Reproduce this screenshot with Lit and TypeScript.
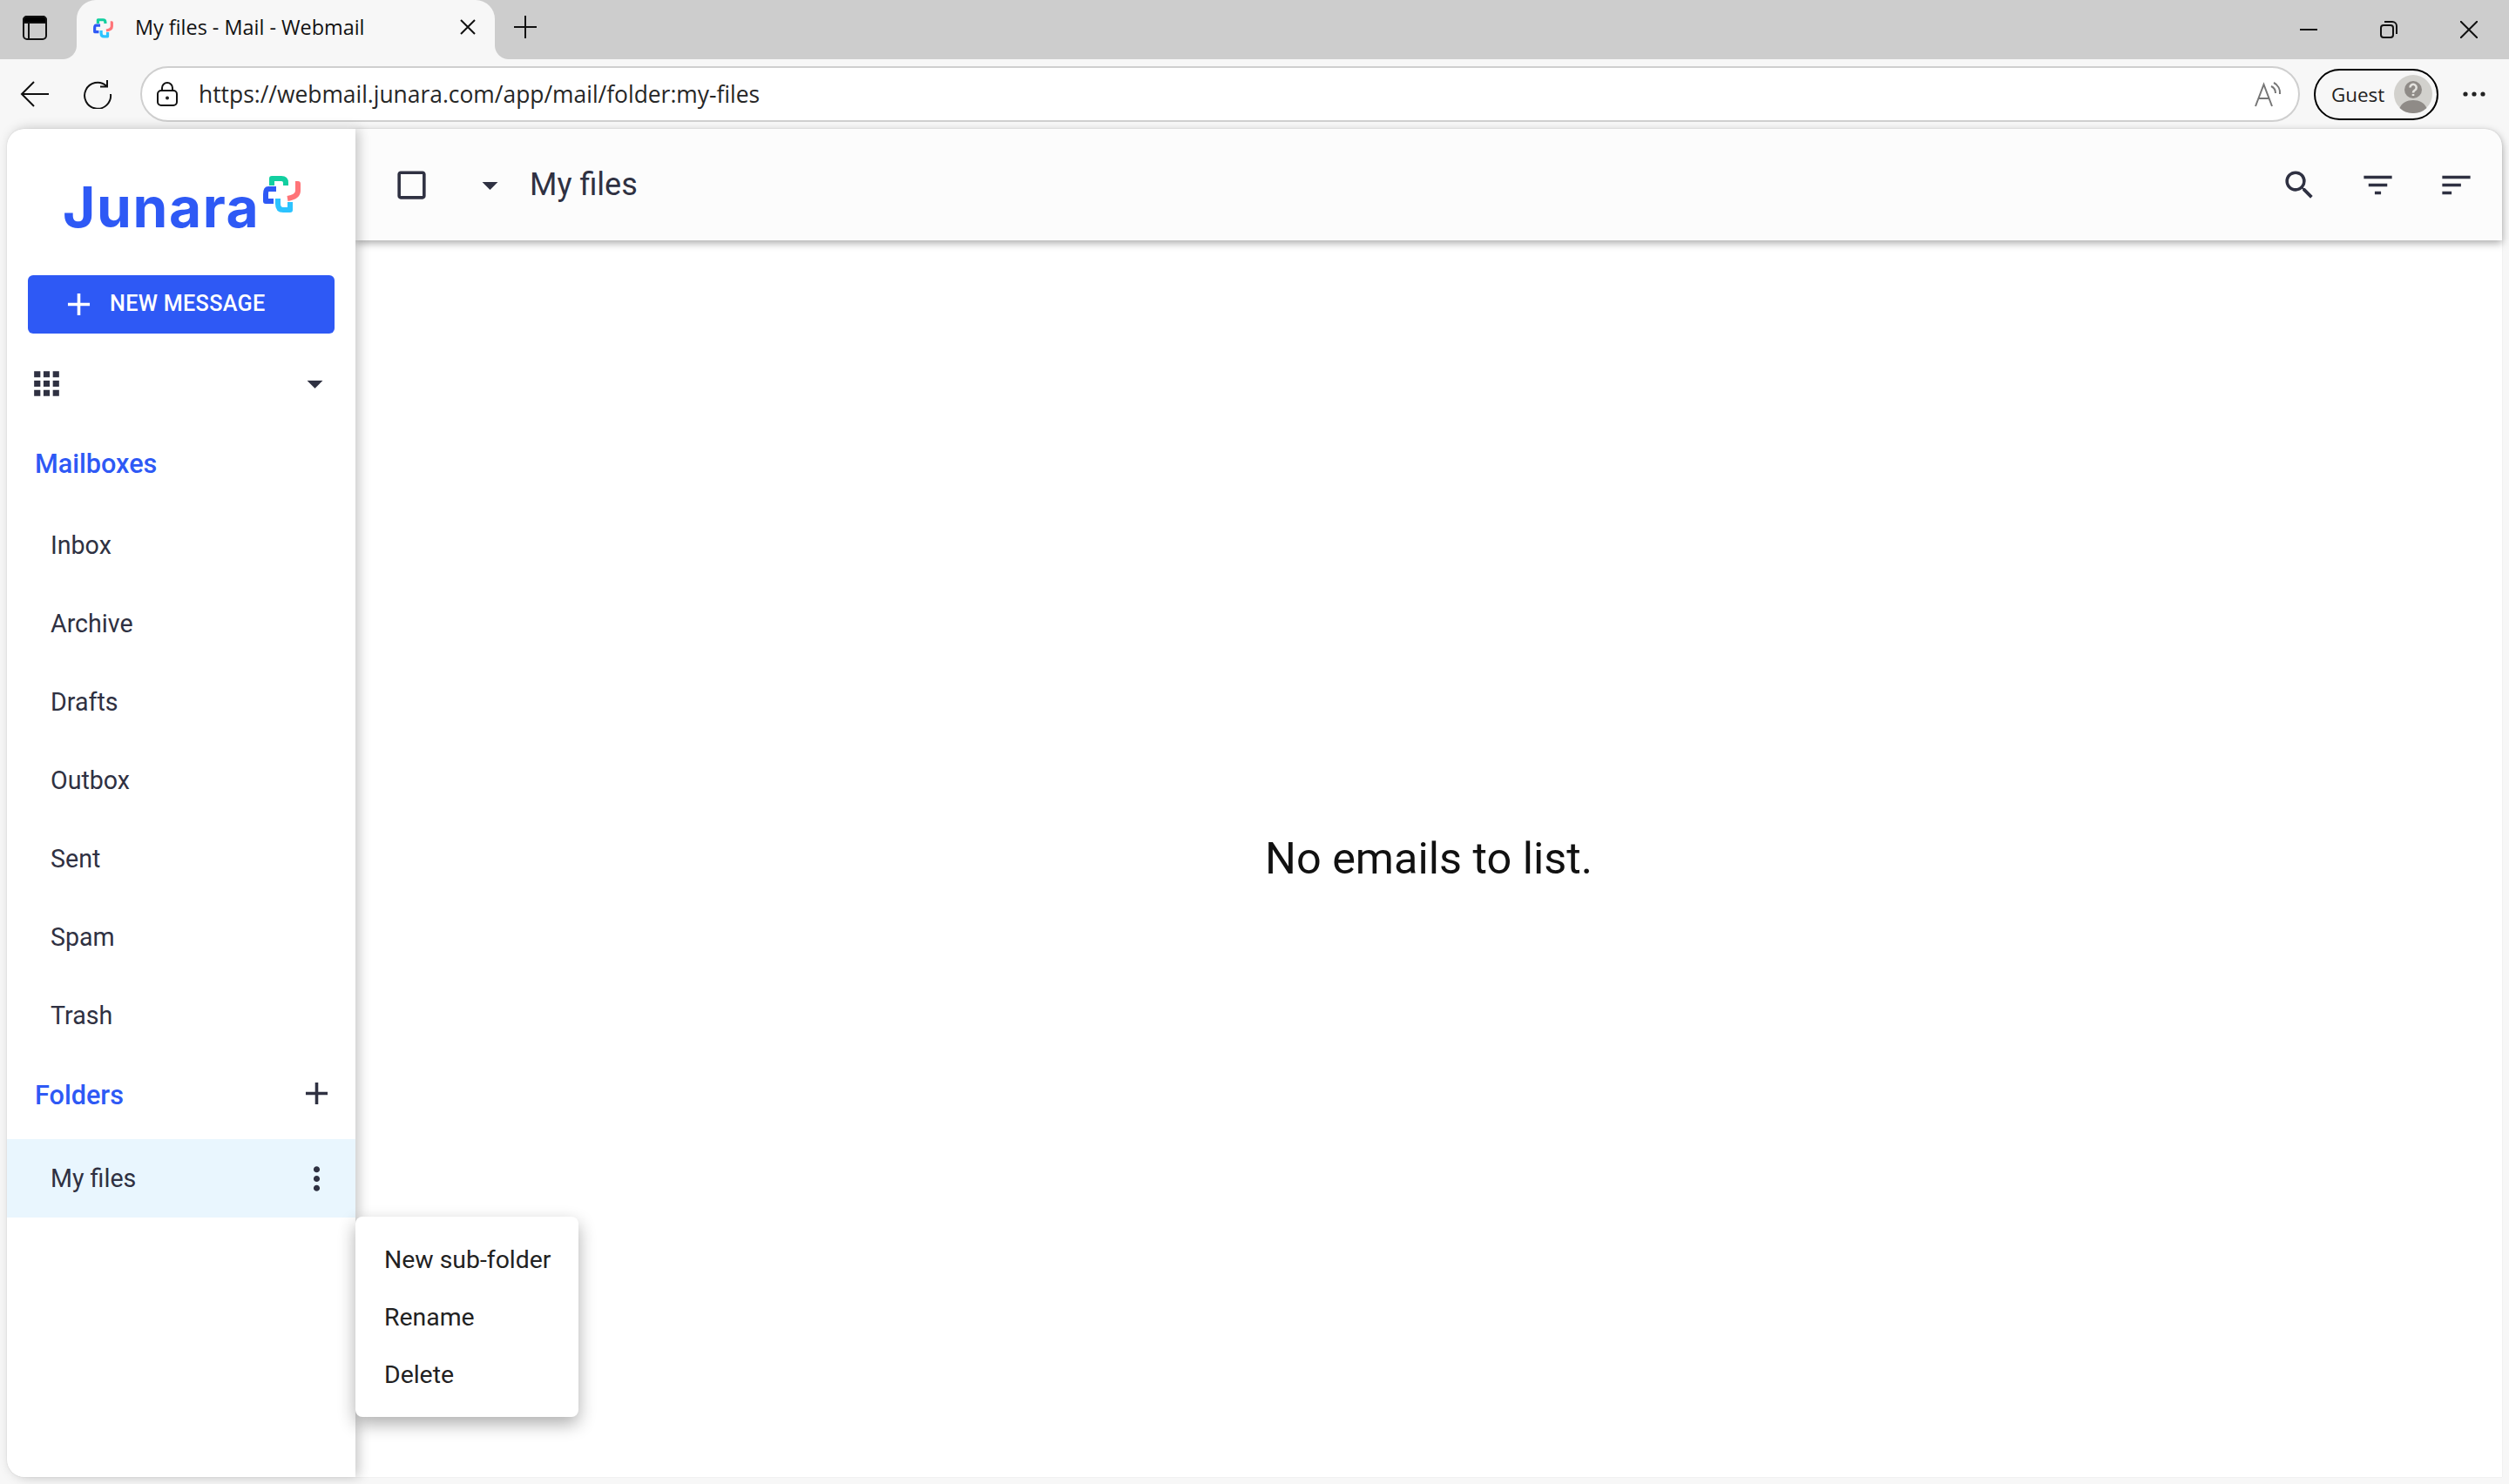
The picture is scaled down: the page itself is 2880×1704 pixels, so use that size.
import { LitElement, css, html, svg } from "lit";
import { customElement } from "lit/decorators.js";

const mailboxes = ["Inbox", "Archive", "Drafts", "Outbox", "Sent", "Spam", "Trash"];
const folderMenu = ["New sub-folder", "Rename", "Delete"];

const md = (d: string) => html`<svg class="md" viewBox="0 0 24 24"><path d=${d}></path></svg>`;

const icons = {
  search: "M15.5 14h-.79l-.28-.27A6.471 6.471 0 0 0 16 9.5 6.5 6.5 0 1 0 9.5 16c1.61 0 3.09-.59 4.23-1.57l.27.28v.79l5 4.99L20.49 19l-4.99-5zm-6 0C7.01 14 5 11.99 5 9.5S7.01 5 9.5 5 14 7.01 14 9.5 11.99 14 9.5 14z",
  filter: "M10 18h4v-2h-4v2zM3 6v2h18V6H3zm3 7h12v-2H6v2z",
  sort: "M3 18h6v-2H3v2zM3 6v2h18V6H3zm0 7h12v-2H3v2z",
  apps: "M4 8h4V4H4v4zm6 12h4v-4h-4v4zm-6 0h4v-4H4v4zm0-6h4v-4H4v4zm6 0h4v-4h-4v4zm6-10v4h4V4h-4zm-6 4h4V4h-4v4zm6 6h4v-4h-4v4zm0 6h4v-4h-4v4z",
  caret: "M7 10l5 5 5-5z",
  checkbox: "M19 5v14H5V5h14m0-2H5c-1.1 0-2 .9-2 2v14c0 1.1.9 2 2 2h14c1.1 0 2-.9 2-2V5c0-1.1-.9-2-2-2z",
  plus: "M19 13h-6v6h-2v-6H5v-2h6V5h2v6h6v2z",
  dots: "M12 8c1.1 0 2-.9 2-2s-.9-2-2-2-2 .9-2 2 .9 2 2 2zm0 2c-1.1 0-2 .9-2 2s.9 2 2 2 2-.9 2-2-.9-2-2-2zm0 6c-1.1 0-2 .9-2 2s.9 2 2 2 2-.9 2-2-.9-2-2-2z",
};

// the four puzzle pieces of the logo, drawn in the 47x47 box used by both the sidebar and the favicon
const logoMark = svg`
  <g fill="none" stroke-width="6" stroke-linejoin="round">
    <path stroke="#12cfa0" d="M12 15V7H23Q28 7 28 12V15"></path>
    <path stroke="#2e59f5" d="M17 19H8Q5 19 5 25V33H14"></path>
    <path stroke="#ff7478" d="M39 13H42V21Q42 28 30 30"></path>
    <path stroke="#2cc3ff" d="M19 30V36Q19 43 25 43H33V34"></path>
  </g>`;

@customElement("app-root")
export class AppRoot extends LitElement {
  static styles = css`
    :host {
      display: flex;
      flex-direction: column;
      height: 1704px;
      background: #f7f7f7;
      font-family: Roboto, sans-serif;
      color: #2f3142;
      overflow: hidden;
    }
    .tabstrip {
      height: 68px;
      background: #cdcdcd;
      display: flex;
      align-items: stretch;
      flex: none;
    }
    .sidebar-toggle {
      width: 28px;
      height: 28px;
      margin: 18px 34px 0 26px;
    }
    .tab {
      width: 480px;
      background: #f7f7f7;
      border-radius: 22px 22px 0 0;
      display: flex;
      align-items: center;
      position: relative;
      padding-left: 18px;
      padding-bottom: 6px;
      box-sizing: border-box;
      font-family: "Open Sans", sans-serif;
      font-size: 23.4px;
      color: #111;
    }
    .tab::before,
    .tab::after {
      content: "";
      position: absolute;
      bottom: 0;
      width: 16px;
      height: 16px;
    }
    .tab::before {
      left: -16px;
      background: radial-gradient(circle at 0 0, #cdcdcd 15.5px, #f7f7f7 16.5px);
    }
    .tab::after {
      right: -16px;
      background: radial-gradient(circle at 100% 0, #cdcdcd 15.5px, #f7f7f7 16.5px);
    }
    .favicon {
      width: 25px;
      height: 25px;
      margin-right: 24px;
      flex: none;
    }
    .tab-title {
      flex: 1;
    }
    .tab-close {
      width: 18px;
      height: 18px;
      margin-right: 22px;
    }
    .newtab {
      width: 28px;
      height: 28px;
      margin: 17px 0 0 21px;
    }
    .spacer {
      flex: 1;
    }
    .winbtns {
      display: flex;
      gap: 72px;
      padding: 24px 36px 0 0;
    }
    .winbtns svg {
      width: 20px;
      height: 20px;
    }
    .stroke {
      fill: none;
      stroke: #111;
      stroke-width: 2;
    }
    .navbar {
      height: 80px;
      display: flex;
      align-items: center;
      flex: none;
    }
    .nav-icon {
      width: 34px;
      height: 34px;
      margin-left: 23px;
    }
    .nav-icon + .nav-icon {
      margin-left: 38px;
    }
    .address {
      width: 2479px;
      height: 64px;
      box-sizing: border-box;
      margin-left: 32px;
      border: 2px solid #cfcfcf;
      border-radius: 32px;
      background: #fff;
      display: flex;
      align-items: center;
      padding: 0 18px 0 15px;
    }
    .lock {
      width: 28px;
      height: 28px;
      flex: none;
    }
    .url {
      flex: 1;
      margin-left: 22px;
      font-family: "Open Sans", sans-serif;
      font-size: 26.4px;
      color: #262626;
    }
    .read-aloud {
      width: 32px;
      height: 30px;
    }
    .guest {
      width: 143px;
      height: 59px;
      box-sizing: border-box;
      margin-left: 16px;
      border: 2px solid #000;
      border-radius: 30px;
      display: flex;
      align-items: center;
      padding-left: 18px;
      font-family: "Open Sans", sans-serif;
      font-size: 22.4px;
      color: #222;
    }
    .avatar {
      width: 44px;
      height: 44px;
      margin-left: 11px;
      flex: none;
    }
    .more {
      width: 28px;
      height: 8px;
      margin-left: 27px;
    }
    .card {
      flex: 1;
      margin: 0 8px 8px;
      display: flex;
      min-height: 0;
      background: #fff;
      border-radius: 20px 20px 0 20px;
      box-shadow: 0 0 1px rgba(0, 0, 0, 0.25);
    }
    .md {
      width: 43px;
      height: 43px;
      fill: #2f3142;
      flex: none;
      display: block;
    }
    .sidebar {
      width: 400px;
      flex: none;
      background: #fff;
      position: relative;
      z-index: 2;
      border-radius: 20px 0 0 20px;
      box-shadow: 4px 0 14px rgba(0, 0, 0, 0.22);
      display: flex;
      flex-direction: column;
    }
    .logo {
      height: 168px;
      flex: none;
      display: flex;
      align-items: flex-start;
      padding: 55px 0 0 64px;
      box-sizing: border-box;
      font-family: Inter, sans-serif;
      font-weight: 700;
      font-size: 64px;
      line-height: 70px;
      letter-spacing: 1.6px;
      color: #2e59f5;
    }
    .logo svg {
      width: 47px;
      height: 47px;
      margin: -5px 0 0 2px;
      flex: none;
    }
    .compose {
      height: 67px;
      margin: 0 24px;
      flex: none;
      box-sizing: border-box;
      background: #2e59f5;
      border-radius: 6px;
      color: #fff;
      display: flex;
      align-items: center;
      padding: 0 0 3px 37px;
      font-size: 25.2px;
      font-weight: 500;
      letter-spacing: 0.3px;
    }
    .compose .md {
      fill: #fff;
      margin: 3px 14px 0 0;
    }
    .switcher {
      height: 103px;
      flex: none;
      display: flex;
      align-items: center;
      justify-content: space-between;
      padding: 12px 25px 0 24px;
      box-sizing: border-box;
    }
    .heading {
      height: 92px;
      padding: 0 23px 3px 32px;
      flex: none;
      display: flex;
      align-items: center;
      justify-content: space-between;
      font-size: 30.6px;
      font-weight: 500;
      color: #2e59f5;
    }
    .heading .md {
      margin-top: -3px;
    }
    .item {
      height: 90px;
      flex: none;
      display: flex;
      align-items: center;
      justify-content: space-between;
      padding: 0 23px 0 50px;
      font-size: 28.6px;
    }
    .item.active {
      background: #e9f6fe;
    }
    .folder {
      position: relative;
      margin-top: 2px;
    }
    .menu {
      position: absolute;
      left: 100%;
      top: 100%;
      width: 256px;
      height: 230px;
      box-sizing: border-box;
      padding: 16px 0;
      background: #fff;
      border-radius: 8px;
      box-shadow: 0 8px 20px rgba(0, 0, 0, 0.32);
      color: #222;
      margin-top: -1px;
    }
    .menu div {
      height: 66px;
      display: flex;
      align-items: center;
      padding-left: 33px;
      font-size: 28.4px;
    }
    .main {
      flex: 1;
      min-width: 0;
      display: flex;
      flex-direction: column;
    }
    .toolbar {
      height: 128px;
      flex: none;
      background: #fcfcfc;
      border-top-right-radius: 20px;
      box-shadow: 0 3px 10px rgba(0, 0, 0, 0.35);
      display: flex;
      align-items: center;
      padding: 0 31px 0 43px;
      gap: 47px;
      position: relative;
      z-index: 1;
    }
    .title {
      flex: 1;
      margin-left: -23px;
      font-size: 36px;
    }
    .empty {
      flex: 1;
      display: flex;
      align-items: center;
      justify-content: center;
      padding-bottom: 2px;
      font-size: 50.4px;
      color: #111;
    }
  `;

  render() {
    return html`
      <div class="tabstrip">
        <svg class="sidebar-toggle" viewBox="0 0 28 28">
          <rect x="1" y="1" width="26" height="26" rx="4" class="stroke" stroke-width="2"></rect>
          <path d="M1 5a4 4 0 0 1 4-4h18a4 4 0 0 1 4 4v3H1zM7 8v19" stroke="#111" stroke-width="2"></path>
        </svg>
        <div class="tab">
          <svg class="favicon" viewBox="0 0 47 47">${logoMark}</svg>
          <span class="tab-title">My files - Mail - Webmail</span>
          <svg class="tab-close" viewBox="0 0 18 18"><path class="stroke" d="M1 1l16 16M17 1L1 17"></path></svg>
        </div>
        <svg class="newtab" viewBox="0 0 28 28"><path class="stroke" d="M14 1v26M1 14h26"></path></svg>
        <div class="spacer"></div>
        <div class="winbtns">
          <svg viewBox="0 0 20 20"><path class="stroke" d="M0 10h20"></path></svg>
          <svg viewBox="0 0 20 20">
            <rect class="stroke" x="1" y="5" width="14" height="14" rx="3"></rect>
            <path class="stroke" d="M5 1h9a5 5 0 0 1 5 5v9"></path>
          </svg>
          <svg viewBox="0 0 20 20"><path class="stroke" d="M0 0l20 20M20 0L0 20"></path></svg>
        </div>
      </div>
      <div class="navbar">
        <svg class="nav-icon" viewBox="0 0 34 34"><path class="stroke" d="M33 17H3M16 3L2 17l14 14"></path></svg>
        <svg class="nav-icon" viewBox="0 0 34 34">
          <path class="stroke" d="M27 7.5A15 15 0 1 0 32 17M28 1v7.5h-8"></path>
        </svg>
        <div class="address">
          <svg class="lock" viewBox="0 0 28 28">
            <rect class="stroke" x="3" y="10" width="22" height="17" rx="4" stroke="#333"></rect>
            <path class="stroke" d="M8 10V7a6 6 0 0 1 12 0v3"></path>
            <circle cx="14" cy="18.5" r="2" fill="#222"></circle>
          </svg>
          <span class="url">https://webmail.junara.com/app/mail/folder:my-files</span>
          <svg class="read-aloud" viewBox="0 0 32 30">
            <path d="M1 29L10.5 4 20 29M4.5 20h12" fill="none" stroke="#767676" stroke-width="2"></path>
            <path d="M19 6a9 9 0 0 1 5 8M22 2a13 13 0 0 1 7 13" fill="none" stroke="#767676" stroke-width="2"></path>
          </svg>
        </div>
        <div class="guest">
          Guest
          <svg class="avatar" viewBox="0 0 44 44">
            <circle cx="22" cy="22" r="22" fill="#d2d1cd"></circle>
            <circle cx="22" cy="17" r="10" fill="#8f8b87"></circle>
            <path d="M18.5 14.5a3.6 3.6 0 1 1 5.5 3c-1.3.8-2 1.400-2 3M22 22v2" fill="none" stroke="#e4e3df" stroke-width="2.6"></path>
            <path d="M6.500 38C9 32 15 29 22 29s13 3 15.500 9A22 22 0 0 1 22 44 22 22 0 0 1 6.500 38z" fill="#8f8b87"></path>
          </svg>
        </div>
        <svg class="more" viewBox="0 0 28 8">
          <circle cx="4" cy="4" r="2.6" fill="#222"></circle>
          <circle cx="14" cy="4" r="2.6" fill="#222"></circle>
          <circle cx="24" cy="4" r="2.6" fill="#222"></circle>
        </svg>
      </div>
      <div class="card">
        <aside class="sidebar">
          <div class="logo">
            <span>Junara</span>
            <svg viewBox="0 0 47 47">${logoMark}</svg>
          </div>
          <div class="compose">${md(icons.plus)}NEW MESSAGE</div>
          <div class="switcher">${md(icons.apps)}${md(icons.caret)}</div>
          <div class="heading">Mailboxes</div>
          ${mailboxes.map((name) => html`<div class="item">${name}</div>`)}
          <div class="heading">Folders ${md(icons.plus)}</div>
          <div class="folder">
            <div class="item active">My files ${md(icons.dots)}</div>
            <div class="menu">${folderMenu.map((name) => html`<div>${name}</div>`)}</div>
          </div>
        </aside>
        <main class="main">
          <div class="toolbar">
            ${md(icons.checkbox)} ${md(icons.caret)}
            <span class="title">My files</span>
            ${md(icons.search)} ${md(icons.filter)} ${md(icons.sort)}
          </div>
          <div class="empty">No emails to list.</div>
        </main>
      </div>
    `;
  }
}
